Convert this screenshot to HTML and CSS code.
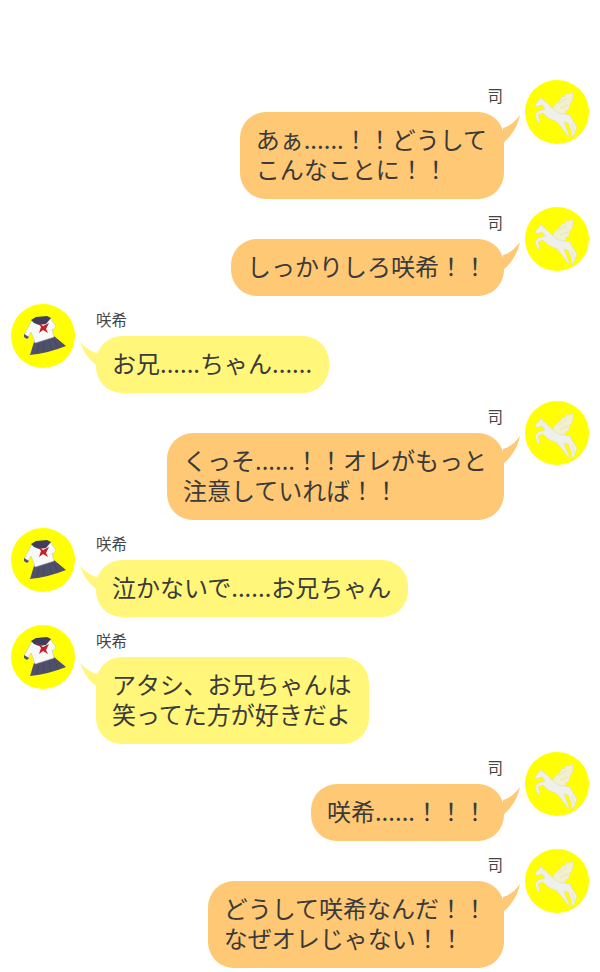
FILE: index.html
```html
<!DOCTYPE html>
<html lang="ja">
<head>
    <meta charset="UTF-8">
    <meta name="viewport" content="width=device-width, initial-scale=1.0">
    <title>会話</title>
    <link rel="stylesheet" href="styles.css">
</head>
<body>

    <!-- shared drawings -->
    <svg class="defs" width="0" height="0">
        <defs>
            <symbol id="pegasus" viewBox="0 0 64 64">
                <circle cx="32" cy="32" r="32" fill="#ffff00"/>
                <path d="M27 29 C29 25 32 22 35 20 L37 16 L39 17 L42 13 L44 14 L48 12 L48 17 L47 22 L45 24 L44 29 L41 31 L40 35 L30 34 Z" fill="#f1f1cf" stroke="#dcdcb0" stroke-width="0.5" stroke-linejoin="round"/>
                <path d="M10 25 L12 22 L15 19 L16 17 L18 20 L21 22 L27 28 L33 33 L39 34 L45 35 L48 41 L52 47 L50 53 L47 58 L46 50 L43 43 L39 42 L42 50 L45 57 L43 56 L37 48 L32 42 L23 38 L18 33 L13 35 L15 42 L13 43 L10 35 L13 31 L20 29 L17 25 L12 27 Z" fill="#f0f0ea" stroke="#d8d8c4" stroke-width="0.5" stroke-linejoin="round"/>
                <path d="M47 44 L49 52 M33 24 L41 19 M35 28 L43 25" fill="none" stroke="#d8d8b8" stroke-width="0.5"/>
            </symbol>
            <symbol id="uniform" viewBox="0 0 64 64">
                <circle cx="32" cy="32" r="32" fill="#ffff00"/>
                <path d="M23 38 L43 32 L55 42 Q38 49 19 51 Z" fill="#50506a"/>
                <path d="M28 40 L26 49 M33 38 L32 48 M38 36 L40 46 M43 35 L47 44" stroke="#42425a" stroke-width="0.6" fill="none"/>
                <path d="M21 16 L39 14 L45 22 L42 26 L41 25 L43 33 L24 39 L22 33 L20 28 L17 33 L13 31 Z" fill="#f8f8f6" stroke="#bdbdc2" stroke-width="0.5"/>
                <path d="M13 30 L18 33 L16 35 L13 33 Z" fill="#50506a"/>
                <path d="M20 16 L25 13 L36 12 L40 14 L35 20 L28 21 L23 19 Z" fill="#3f3f5c"/>
                <path d="M26 18 L32 22 L38 19 L35 25 L37 29 L32 26 L28 29 L30 23 Z" fill="#c4202c"/>
            </symbol>
        </defs>
    </svg>

    <div class="chat">

        <div class="row right">
            <svg class="avatar"><use href="#pegasus"/></svg>
            <div class="msg">
                <div class="name">司</div>
                <div class="bubble">
                    <svg class="tail" width="18" height="28" viewBox="0 0 18 28"><path d="M0 13 C7 11 12 7 17 0 C15 10 9 21 0 28 Z"/></svg>
                    あぁ......！！どうして<br>こんなことに！！
                </div>
            </div>
        </div>

        <div class="row right">
            <svg class="avatar"><use href="#pegasus"/></svg>
            <div class="msg">
                <div class="name">司</div>
                <div class="bubble">
                    <svg class="tail" width="18" height="28" viewBox="0 0 18 28"><path d="M0 13 C7 11 12 7 17 0 C15 10 9 21 0 28 Z"/></svg>
                    しっかりしろ咲希！！
                </div>
            </div>
        </div>

        <div class="row left">
            <svg class="avatar"><use href="#uniform"/></svg>
            <div class="msg">
                <div class="name">咲希</div>
                <div class="bubble">
                    <svg class="tail" width="18" height="24" viewBox="0 0 18 24"><path d="M1 0 C5 6 11 10 18 12 L18 24 C10 20 4 10 1 0 Z"/></svg>
                    お兄......ちゃん......
                </div>
            </div>
        </div>

        <div class="row right">
            <svg class="avatar"><use href="#pegasus"/></svg>
            <div class="msg">
                <div class="name">司</div>
                <div class="bubble">
                    <svg class="tail" width="18" height="28" viewBox="0 0 18 28"><path d="M0 13 C7 11 12 7 17 0 C15 10 9 21 0 28 Z"/></svg>
                    くっそ......！！オレがもっと<br>注意していれば！！
                </div>
            </div>
        </div>

        <div class="row left">
            <svg class="avatar"><use href="#uniform"/></svg>
            <div class="msg">
                <div class="name">咲希</div>
                <div class="bubble">
                    <svg class="tail" width="18" height="24" viewBox="0 0 18 24"><path d="M1 0 C5 6 11 10 18 12 L18 24 C10 20 4 10 1 0 Z"/></svg>
                    泣かないで......お兄ちゃん
                </div>
            </div>
        </div>

        <div class="row left">
            <svg class="avatar"><use href="#uniform"/></svg>
            <div class="msg">
                <div class="name">咲希</div>
                <div class="bubble">
                    <svg class="tail" width="18" height="24" viewBox="0 0 18 24"><path d="M1 0 C5 6 11 10 18 12 L18 24 C10 20 4 10 1 0 Z"/></svg>
                    アタシ、お兄ちゃんは<br>笑ってた方が好きだよ
                </div>
            </div>
        </div>

        <div class="row right">
            <svg class="avatar"><use href="#pegasus"/></svg>
            <div class="msg">
                <div class="name">司</div>
                <div class="bubble">
                    <svg class="tail" width="18" height="28" viewBox="0 0 18 28"><path d="M0 13 C7 11 12 7 17 0 C15 10 9 21 0 28 Z"/></svg>
                    咲希......！！！
                </div>
            </div>
        </div>

        <div class="row right">
            <svg class="avatar"><use href="#pegasus"/></svg>
            <div class="msg">
                <div class="name">司</div>
                <div class="bubble">
                    <svg class="tail" width="18" height="28" viewBox="0 0 18 28"><path d="M0 13 C7 11 12 7 17 0 C15 10 9 21 0 28 Z"/></svg>
                    どうして咲希なんだ！！<br>なぜオレじゃない！！
                </div>
            </div>
        </div>

    </div>

</body>
</html>
```

FILE: styles.css
```css
body {
    font-family: "Noto Sans CJK JP", "Noto Sans", sans-serif;
    margin: 0;
    padding: 0;
    background-color: #fff;
    color: #3a3a3a;
}
.defs {
    display: block;
}
.chat {
    display: flex;
    flex-direction: column;
    gap: 8px;
    padding: 80px 11px 0;
}
.row {
    display: flex;
    gap: 21px;
    align-items: flex-start;
}
.row.right {
    flex-direction: row-reverse;
}
.avatar {
    width: 64px;
    height: 64px;
    flex-shrink: 0;
}
.msg {
    display: flex;
    flex-direction: column;
}
.right .msg {
    align-items: flex-end;
}
.left .msg {
    align-items: flex-start;
}
.name {
    font-size: 15.5px;
    line-height: 31px;
    height: 32px;
    color: #444;
}
.right .name {
    padding-right: 1px;
}
.bubble {
    position: relative;
    font-size: 24px;
    line-height: 30px;
    padding: 12px 17px 15px 16px;
    border-radius: 26px;
    white-space: nowrap;
}
.right .bubble {
    background-color: #ffc875;
}
.left .bubble {
    background-color: #fff67a;
}
.tail {
    position: absolute;
    top: 3px;
}
.right .tail {
    left: 100%;
    margin-left: -1px;
    fill: #ffc875;
}
.left .tail {
    right: 100%;
    margin-right: -1px;
    top: 5px;
    fill: #fff67a;
}
```
